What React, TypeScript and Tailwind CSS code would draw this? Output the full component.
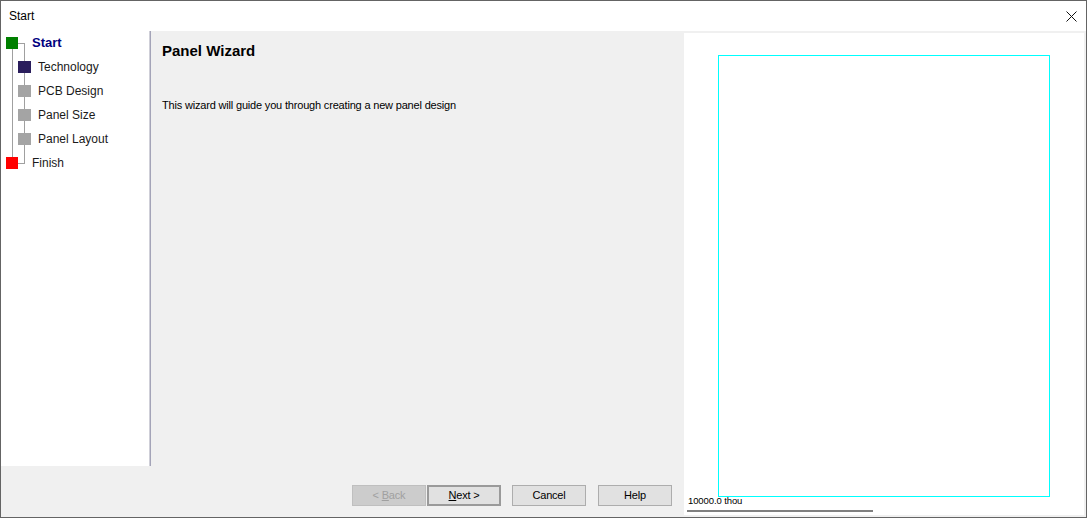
import React from "react";

const FONT = "font-['Liberation_Sans',Arial,sans-serif]";

const STEPS = [
  { label: "Start", level: 0, current: true },
  { label: "Technology", level: 1 },
  { label: "PCB Design", level: 1 },
  { label: "Panel Size", level: 1 },
  { label: "Panel Layout", level: 1 },
  { label: "Finish", level: 0 },
];

/** Connector lines + step markers drawn to the left of the labels. */
function TreeGlyphs() {
  return (
    <svg width="31" height="144" className="shrink-0" shapeRendering="crispEdges">
      <line x1="11.5" y1="18" x2="11.5" y2="126" stroke="#a0a0a0" />
      <line x1="17" y1="12.5" x2="24" y2="12.5" stroke="#a0a0a0" />
      <line x1="23.5" y1="12" x2="23.5" y2="133" stroke="#a0a0a0" />
      <line x1="17" y1="132.5" x2="24" y2="132.5" stroke="#a0a0a0" />
      <rect x="5" y="6" width="12" height="12" fill="#008000" />
      <rect x="17" y="30" width="13" height="12" fill="#2a1d5c" />
      <rect x="17" y="54" width="13" height="12" fill="#a4a4a4" />
      <rect x="17" y="78" width="13" height="12" fill="#a4a4a4" />
      <rect x="17" y="102" width="13" height="12" fill="#a4a4a4" />
      <rect x="5" y="126" width="12" height="12" fill="#ff0000" />
    </svg>
  );
}

function WinButton({
  children,
  disabled,
  isDefault,
  className = "",
}: {
  children: React.ReactNode;
  disabled?: boolean;
  isDefault?: boolean;
  className?: string;
}) {
  const look = disabled
    ? "border border-[#bfbfbf] bg-[#cccccc] text-[#a0a0a0]"
    : isDefault
      ? "border-2 border-[#9a9a9a] bg-[#e1e1e1] text-black"
      : "border border-[#adadad] bg-[#e1e1e1] text-black";
  return (
    <button
      type="button"
      disabled={disabled}
      className={`flex h-[21px] w-[74px] items-center justify-center text-[11px] tracking-[-0.2px] ${look} ${className}`}
    >
      <span>{children}</span>
    </button>
  );
}

export default function App() {
  return (
    <div
      className={`${FONT} flex h-[518px] w-[1087px] flex-col border border-[#646464] bg-[#f0f0f0] text-black`}
    >
      {/* title bar */}
      <div className="flex h-[30px] shrink-0 items-center justify-between bg-white pl-[8px] pr-[9px]">
        <span className="text-[12px]">Start</span>
        <svg width="11" height="11" viewBox="0 0 11 11">
          <path d="M0.5 0.5 L10.5 10.5 M10.5 0.5 L0.5 10.5" stroke="#111" strokeWidth="1" />
        </svg>
      </div>

      <div className="flex flex-1">
        {/* wizard side */}
        <div className="flex w-[683px] flex-col">
          <div className="flex h-[435px]">
            <div className="flex w-[148px] bg-white">
              <TreeGlyphs />
              <ul className="flex flex-col">
                {STEPS.map((s) => (
                  <li
                    key={s.label}
                    className={`flex h-[24px] items-center ${s.level ? "pl-[6px] text-[12px]" : "text-[12px]"} ${
                      s.current ? "text-[13px] font-bold text-[#000080]" : "text-[#1a1a1a]"
                    }`}
                  >
                    {s.label}
                  </li>
                ))}
              </ul>
            </div>
            <div className="w-px bg-[#cfcfd8]" />
            <div className="w-px bg-[#a4a4b8]" />
            <div className="flex-1 pl-[11px] pt-[11px]">
              <h1 className="text-[15px] font-bold leading-[18px]">Panel Wizard</h1>
              <p className="mt-[39px] text-[11px] leading-[13px] tracking-[-0.18px]">
                This wizard will guide you through creating a new panel design
              </p>
            </div>
          </div>

          <div className="flex flex-1 justify-end pr-[12px] pt-[19px]">
            <WinButton disabled>
              &lt; <u>B</u>ack
            </WinButton>
            <WinButton isDefault className="ml-[1px]">
              <u>N</u>ext &gt;
            </WinButton>
            <WinButton className="ml-[11px]">Cancel</WinButton>
            <WinButton className="ml-[12px]">Help</WinButton>
          </div>
        </div>

        {/* preview */}
        <div className="py-[2px] pr-[2px]">
          <div className="flex h-[482px] w-[400px] flex-col bg-white">
            <div className="ml-[34px] mt-[22px] h-[442px] w-[332px] border-[1.5px] border-[#00ffff]" />
            <span className="ml-[4px] mt-[-1px] text-[9.5px] leading-[10px] tracking-[-0.1px]">
              10000.0 thou
            </span>
            <div className="ml-[3px] mt-[4px] h-[2px] w-[186px] bg-[#808080]" />
          </div>
        </div>
      </div>
    </div>
  );
}
